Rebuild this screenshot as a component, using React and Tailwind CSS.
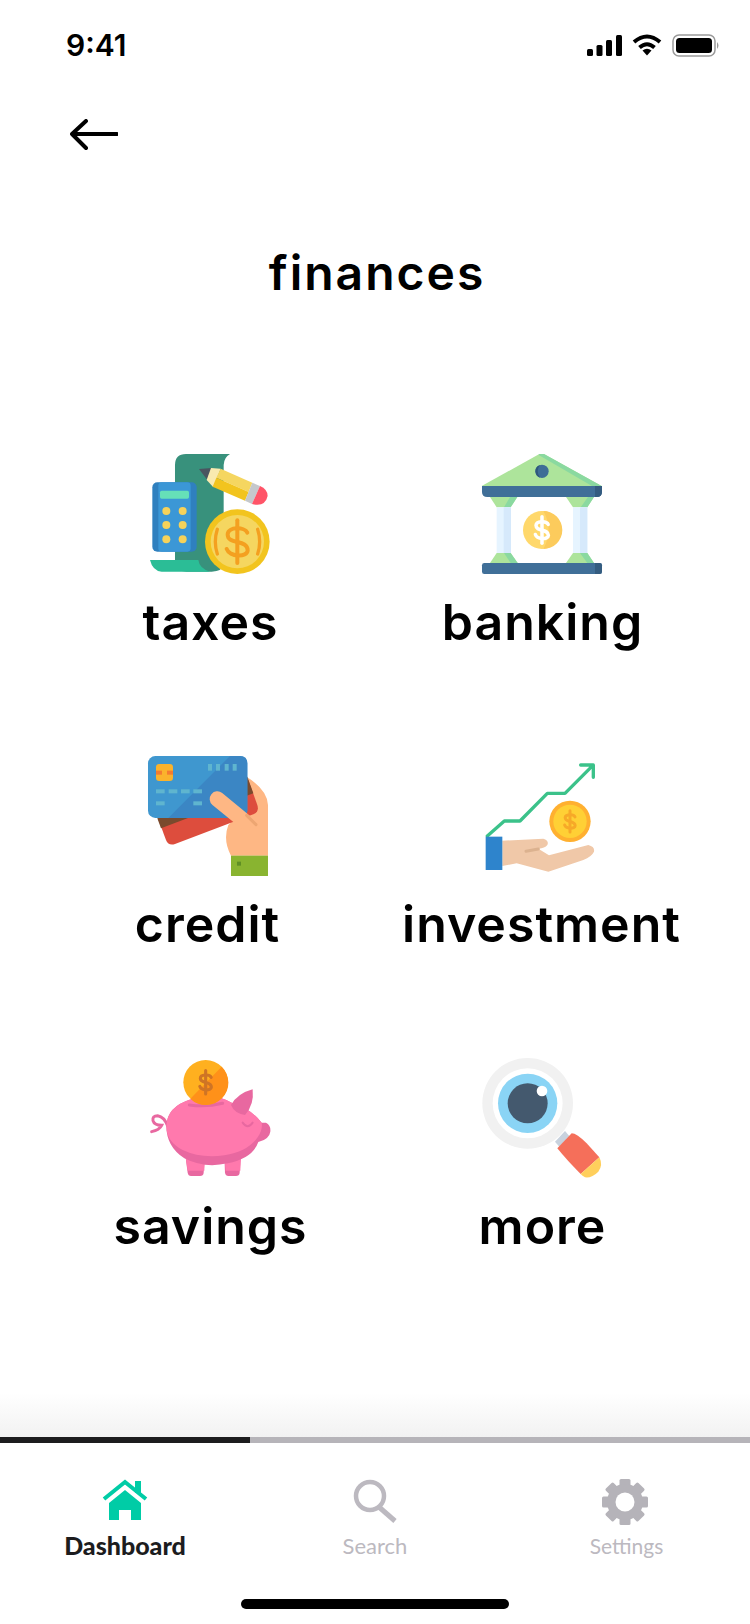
import React from 'react';

const dollar = (cx, cy, s, color, w) => (
  <g transform={`translate(${cx} ${cy}) scale(${s})`} fill="none" stroke={color} strokeWidth={w} strokeLinecap="round">
    <path d="M30 -27C22 -45 -28 -45 -29 -22C-30 10 31 -8 31 26C30 48 -24 46 -32 22" />
    <path d="M0 -64V64" />
  </g>
);

function TaxesIcon() {
  return (
    <g>
      <path d="M135 420V105Q135 72 168 72H300Q282 82 281 105V400Q278 425 245 425H170Z" fill="#38917c" />
      <path d="M60 390H205Q208 415 240 425H95Q68 423 60 390Z" fill="#2bbd96" />
      <rect x="67" y="157" width="133" height="208" rx="15" fill="#2f80bf" />
      <rect x="85" y="157" width="97" height="208" rx="10" fill="#3b97d6" />
      <rect x="90" y="182" width="87" height="24" rx="5" fill="#66e0b8" />
      {[243, 285, 328].map((y) => (
        <g key={y} fill="#f5d25a">
          <circle cx="109" cy={y} r="12" />
          <circle cx="158" cy={y} r="12" />
        </g>
      ))}
      <polygon points="207,117 245,114 232,150" fill="#4a5560" />
      <polygon points="243,114 272,116 250,172 230,150" fill="#f9eab0" />
      <polygon points="272,116 367,158 356,186 259,143" fill="#f5d660" />
      <polygon points="259,143 356,186 345,212 248,170" fill="#f2c41e" />
      <polygon points="367,158 390,168 366,222 345,212" fill="#c5c8cc" />
      <path d="M390 168Q413 178 413 198Q405 232 366 222Z" fill="#ff5468" />
      <circle cx="322" cy="335" r="97" fill="#f2c41e" />
      <circle cx="322" cy="335" r="80" fill="#f5d660" />
      {dollar(322, 335, 1, '#f4a020', 12)}
      <path d="M262 298Q250 335 262 372M383 298Q395 335 383 372" fill="none" stroke="#f4a020" strokeWidth="10" strokeLinecap="round" />
    </g>
  );
}

function BankIcon() {
  return (
    <g>
      <polygon points="65,168 238,72 252,72 425,168" fill="#ade49b" />
      <polygon points="252,72 425,168 396,168 236,75 238,72" fill="#8ad9a0" />
      <circle cx="246" cy="124" r="20" fill="#3e6e96" />
      <path d="M240 105A20 20 0 0 0 240 143Q226 124 240 105Z" fill="#2f587c" />
      <path d="M66 168H426V186Q426 201 410 201H82Q66 201 66 186Z" fill="#406f98" />
      <path d="M405 168H426V186Q426 201 410 201H405Z" fill="#345c80" />
      <polygon points="90,201 172,201 152,232 110,232" fill="#ade49b" />
      <polygon points="150,201 172,201 152,232 132,232" fill="#8ad9a0" />
      <polygon points="318,201 402,201 382,232 339,232" fill="#ade49b" />
      <polygon points="384,201 402,201 382,232 362,232" fill="#8ad9a0" />
      <rect x="110" y="232" width="43" height="137" fill="#e6f4ff" />
      <rect x="131" y="232" width="22" height="137" fill="#d6e9fb" />
      <rect x="339" y="232" width="43" height="137" fill="#e6f4ff" />
      <rect x="360" y="232" width="22" height="137" fill="#d6e9fb" />
      <polygon points="110,369 152,369 173,399 90,399" fill="#ade49b" />
      <polygon points="132,369 152,369 173,399 152,399" fill="#8ad9a0" />
      <polygon points="339,369 382,369 402,399 318,399" fill="#ade49b" />
      <polygon points="360,369 382,369 402,399 382,399" fill="#8ad9a0" />
      <rect x="66" y="399" width="360" height="33" rx="7" fill="#406f98" />
      <path d="M405 399H419Q426 399 426 406V425Q426 432 419 432H405Z" fill="#345c80" />
      <circle cx="246" cy="300" r="57" fill="#ffd86b" />
      <path d="M250 243A57 57 0 0 1 250 357Q282 300 250 243Z" fill="#fccb5c" />
      {dollar(246, 300, 0.62, '#ffffff', 17)}
    </g>
  );
}

function CreditIcon() {
  return (
    <g>
      <path d="M352 112Q412 150 414 195V347H303Q278 300 295 255L352 200Z" fill="#feb784" />
      <path d="M85 238L108 300Q115 318 135 312L372 222Q388 214 382 195L355 120Z" fill="#dd4d3d" />
      <polygon points="82,235 93,265 370,160 352,110" fill="#7a4a2d" />
      <rect x="54" y="48" width="298" height="186" rx="22" fill="#3f97cf" />
      <path d="M115 234L300 48H330Q352 48 352 70V212Q352 234 330 234Z" fill="#3b86c4" />
      <rect x="78" y="72" width="51" height="51" rx="10" fill="#fbb32c" />
      <rect x="78" y="92" width="18" height="12" fill="#f47b30" />
      <rect x="111" y="92" width="18" height="12" fill="#f47b30" />
      <g fill="#5fb5cf">
        {[234, 258, 284, 308].map((x) => (
          <rect key={x} x={x} y="72" width="12" height="20" />
        ))}
        {[78, 116, 153, 190].map((x) => (
          <rect key={x} x={x} y="148" width="26" height="12" />
        ))}
        <rect x="78" y="184" width="26" height="12" />
        <rect x="190" y="184" width="26" height="12" />
      </g>
      <path d="M262 177L345 245" stroke="#feb784" strokeWidth="46" strokeLinecap="round" />
      <path d="M350 226L378 254" stroke="#eda672" strokeWidth="9" strokeLinecap="round" />
      <rect x="303" y="347" width="111" height="61" fill="#89b430" />
      <rect x="321" y="365" width="12" height="12" fill="#5f8f24" />
    </g>
  );
}

function InvestIcon() {
  return (
    <g>
      <path d="M52 258L103 213H150L232 130H285L368 47M332 45H370V82" fill="none" stroke="#3bc28a" strokeWidth="10" strokeLinecap="round" strokeLinejoin="round" />
      <circle cx="300" cy="214" r="62" fill="#ffb030" />
      <circle cx="300" cy="214" r="50" fill="#ffd035" />
      {dollar(300, 214, 0.5, '#f7a928', 18)}
      <path d="M97 272L220 266Q238 272 232 285Q225 295 205 296L237 316L355 285Q375 290 372 305Q365 320 340 330L235 365L140 340L97 348Z" fill="#f0c8a8" />
      <path d="M168 304L205 297" stroke="#dcb28f" strokeWidth="9" strokeLinecap="round" />
      <rect x="47" y="260" width="50" height="100" fill="#2e84cc" />
    </g>
  );
}

function PigIcon() {
  return (
    <g>
      <path d="M80 228Q70 200 50 197Q33 197 36 212Q40 226 62 226Q55 240 32 245" fill="none" stroke="#e868a0" strokeWidth="9" strokeLinecap="round" />
      <path d="M133 315H192L188 368Q187 378 177 378H150Q142 378 140 368Z" fill="#e868a0" />
      <path d="M250 315H300L296 368Q295 378 285 378H262Q254 378 252 368Z" fill="#e868a0" />
      <path d="M133 315H192L190 362H140Z" fill="#ff79ad" />
      <path d="M250 315H300L298 362H254Z" fill="#ff79ad" />
      <path d="M76 228Q78 170 150 148Q215 125 272 158Q325 172 362 218L375 218Q390 225 388 245Q385 268 352 276Q335 325 260 340Q190 356 130 325Q76 290 76 228Z" fill="#e868a0" />
      <path d="M76 228Q78 170 150 148Q215 125 272 158Q325 172 362 218Q366 240 350 262Q320 305 250 316Q180 326 125 300Q76 275 76 228Z" fill="#ff79ad" />
      <path d="M270 165Q290 130 335 118Q340 165 312 195Q280 190 270 165Z" fill="#e868a0" />
      <path d="M145 165Q195 172 245 160" fill="none" stroke="#e868a0" strokeWidth="9" strokeLinecap="round" />
      <path d="M305 218Q320 240 335 218" fill="none" stroke="#e868a0" strokeWidth="6" strokeLinecap="round" />
      <circle cx="194" cy="97" r="67" fill="#ffb01f" />
      <path d="M242 50A67 67 0 0 1 148 146Z" fill="#ff9119" />
      {dollar(194, 97, 0.55, '#cf7425', 17)}
    </g>
  );
}

function LensIcon() {
  return (
    <g>
      <circle cx="173" cy="160" r="136" fill="#f1f1f1" />
      <circle cx="173" cy="160" r="105" fill="#ffffff" />
      <circle cx="173" cy="160" r="89" fill="#8ad4f5" />
      <circle cx="173" cy="160" r="60" fill="#44596e" />
      <circle cx="216" cy="123" r="16" fill="#ffffff" />
      <polygon points="255,275 285,243 298,258 268,290" fill="#c8d2de" />
      <path d="M262 295L305 250Q320 250 350 280L388 322L332 372Q290 330 262 295Z" fill="#f56f5a" />
      <path d="M388 322Q400 345 385 365Q365 385 345 382Q337 378 332 372Z" fill="#ffcf5c" />
    </g>
  );
}

// x/y shift the crop-sized drawing inside its 180x160 box
const items = [
  { label: 'taxes', Icon: TaxesIcon, x: 9, y: 0, nudge: '' },
  { label: 'banking', Icon: BankIcon, x: 8, y: 0, nudge: 'pl-[2px]' },
  { label: 'credit', Icon: CreditIcon, x: 9, y: 8, nudge: 'pr-[6px]' },
  { label: 'investment', Icon: InvestIcon, x: 18, y: 18, nudge: '' },
  { label: 'savings', Icon: PigIcon, x: 20, y: 16, nudge: '' },
  { label: 'more', Icon: LensIcon, x: 18, y: 16, nudge: 'pl-[2px]' },
];

function StatusBar() {
  return (
    <div className="flex h-[90px] items-center justify-between pl-[66px] pr-[30px]">
      <span className="font-['Inter',sans-serif] text-[30px] font-semibold leading-none text-black">9:41</span>
      <div className="flex items-center gap-[10px]">
        <svg width="35" height="21" viewBox="0 0 35 21" fill="#000">
          <rect x="0" y="14" width="6" height="7" rx="1.5" />
          <rect x="9.5" y="10" width="6" height="11" rx="1.5" />
          <rect x="19" y="5" width="6" height="16" rx="1.5" />
          <rect x="29" y="0" width="6" height="21" rx="1.5" />
        </svg>
        <svg width="30" height="22" viewBox="0 0 30 22" fill="none" stroke="#000" strokeWidth="4">
          <path d="M2 8Q15 -3 28 8" />
          <path d="M7.5 13.5Q15 7 22.500 13.500" />
          <path d="M15 21.500L10.500 16.500Q15 13 19.500 16.500Z" fill="#000" stroke="none" />
        </svg>
        <svg width="48" height="23" viewBox="0 0 48 23">
          <rect x="1" y="1" width="42" height="21" rx="6" fill="none" stroke="#9a9a9a" strokeWidth="1.500" />
          <rect x="4" y="4" width="36" height="15" rx="3.500" fill="#000" />
          <path d="M45 8Q48 11.500 45 15Z" fill="#9a9a9a" />
        </svg>
      </div>
    </div>
  );
}

function TabBar() {
  return (
    <div className="bg-white">
      <div className="h-[44px] bg-gradient-to-b from-white to-[#f2f2f2]" />
      <div className="grid h-[6px] grid-cols-3 bg-[#b6b4b9]">
        <div className="bg-[#1c1c1e]" />
      </div>
      <div className="grid grid-cols-3 pt-[35px] font-['Lato',sans-serif]">
        <div className="flex flex-col items-center">
          <svg className="h-[48px] w-[48px]" viewBox="0 0 48 48">
            <path d="M3 21L24 4L45 21" fill="none" stroke="#00cca6" strokeWidth="4" />
            <rect x="34" y="3" width="6" height="12" fill="#00cca6" />
            <path d="M24 12L40 25V42H30V32H18V42H8V25Z" fill="#00cca6" />
          </svg>
          <span className="mt-[5px] text-[25px] font-black leading-[28px] text-[#1c1c1e]">Dashboard</span>
        </div>
        <div className="flex flex-col items-center">
          <svg className="h-[48px] w-[48px]" viewBox="0 0 48 48" fill="none" stroke="#bcb9c0">
            <circle cx="19" cy="18" r="14" strokeWidth="4.500" />
            <path d="M28 29L44 43" strokeWidth="5" />
          </svg>
          <span className="mt-[6px] text-[22px] leading-[28px] text-[#bcb9c0]">Search</span>
        </div>
        <div className="flex flex-col items-center">
          <svg className="h-[48px] w-[48px]" viewBox="0 0 48 48" fill="#b5b3b9">
            {[0, 45, 90, 135].map((a) => (
              <rect key={a} x="18.500" y="1" width="11" height="46" rx="1.500" transform={`rotate(${a} 24 24)`} />
            ))}
            <circle cx="24" cy="24" r="18" />
            <circle cx="24" cy="24" r="9.500" fill="#ffffff" />
          </svg>
          <span className="mt-[6px] pl-[3px] text-[21px] leading-[28px] text-[#bcb9c0]">Settings</span>
        </div>
      </div>
      <div className="flex justify-center pb-[15px] pt-[39px]">
        <div className="h-[10px] w-[268px] rounded-full bg-black" />
      </div>
    </div>
  );
}

export default function App() {
  return (
    <div className="flex h-[1624px] w-[750px] flex-col overflow-hidden bg-white font-['Inter',sans-serif] text-black">
      <StatusBar />

      <div className="pl-[70px] pt-[29px]">
        <svg width="48" height="32" viewBox="0 0 48 32" fill="none" stroke="#000" strokeWidth="4" strokeLinecap="round" strokeLinejoin="round">
          <path d="M2 15H47M16 2L2 15L16 29" />
        </svg>
      </div>

      <h1 className="mt-[92px] pl-[4px] text-center text-[48px] font-semibold leading-[60px] tracking-[2px]">finances</h1>

      <div className="ml-[45px] mt-[127px] grid w-[662px] grid-cols-2 gap-y-[78px]">
        {items.map(({ label, Icon, x, y, nudge }) => (
          <div key={label} className="flex flex-col items-center">
            <svg width="180" height="160" viewBox="0 0 180 160">
              <g transform={`translate(${x} ${y}) scale(0.3333)`}>
                <Icon />
              </g>
            </svg>
            <span className={`text-[50px] font-semibold leading-[64px] tracking-[1px] ${nudge}`}>{label}</span>
          </div>
        ))}
      </div>

      <div className="flex-1" />
      <TabBar />
    </div>
  );
}
